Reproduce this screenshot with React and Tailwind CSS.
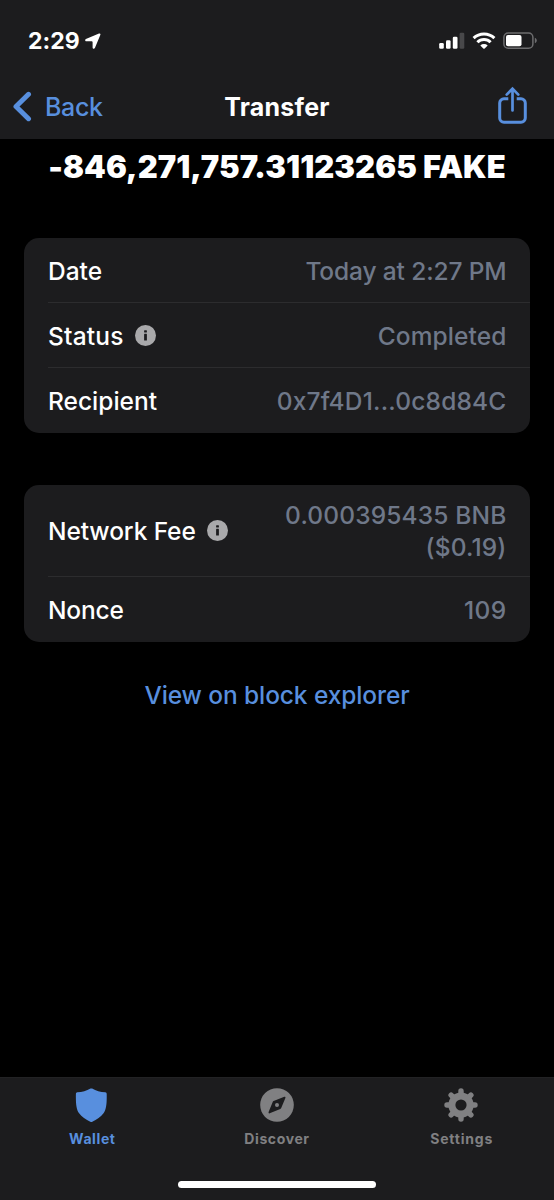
import clsx from 'clsx';

const details = [
  { label: 'Date', value: 'Today at 2:27 PM', labelTracking: 'tracking-[0px]', valueTracking: 'tracking-[-0.13px]' },
  { label: 'Status', value: 'Completed', info: true, labelTracking: 'tracking-[0.2px]', valueTracking: 'tracking-[0.1px]' },
  { label: 'Recipient', value: '0x7f4D1...0c8d84C', labelTracking: 'tracking-[0px]', valueTracking: 'tracking-[0.18px]' },
];

function InfoIcon() {
  return (
    <svg className="ml-[11.5px] h-[21px] w-[21px] shrink-0" viewBox="0 0 21 21">
      <circle cx="10.5" cy="10.5" r="10.5" fill="#a9a9ab" />
      <rect x="9.1" y="5.2" width="2.8" height="2.4" rx="0.5" fill="#1c1c1e" />
      <rect x="9.1" y="8.8" width="2.8" height="6.8" rx="0.4" fill="#1c1c1e" />
    </svg>
  );
}

function Row({ label, value, info, labelTracking, valueTracking, last, tall }) {
  return (
    <div
      className={clsx(
        'ml-6 flex items-center justify-between pr-[23.5px]',
        tall ? 'h-[92px]' : 'h-[65px]',
        !last && 'border-b border-[#2c2c2e]'
      )}
    >
      <div className="flex items-center">
        <span className={clsx('leading-8 whitespace-nowrap text-white', !tall && !last && 'pt-px', labelTracking)}>{label}</span>
        {info && <InfoIcon />}
      </div>
      <span className={clsx('text-right leading-8 whitespace-pre text-[#6f7889]', !tall && !last && 'pt-px', valueTracking)}>
        {value}
      </span>
    </div>
  );
}

function StatusBar() {
  return (
    <div className="flex h-[74px] items-center justify-between pt-[7px] pr-[16px] pl-[28px]">
      <div className="flex items-center">
        <span className="text-[23px] leading-7 font-bold tracking-[0.05px]">2:29</span>
        <svg className="ml-[5px] h-[16px] w-[16px]" viewBox="0 0 16 16" fill="white">
          <path d="M14 .5.9 6C-.2 6.6 0 8.3 1.3 8.3H6.6Q7.6 8.3 7.6 9.3V14.4C7.6 15.9 9.2 16.2 9.9 15L15.3 2C15.8.8 15.1.1 14 .5Z" />
        </svg>
      </div>
      <div className="flex items-center">
        <svg className="h-[17px] w-[26px]" viewBox="0 0 26 17" fill="white">
          <rect x="0.2" y="11" width="4.6" height="5.8" rx="1.3" />
          <rect x="7" y="8.2" width="4.6" height="8.6" rx="1.3" />
          <rect x="13.8" y="4.7" width="4.7" height="12.1" rx="1.3" />
          <rect x="20.6" y="0.8" width="4.7" height="16" rx="1.3" fill="#48484a" />
        </svg>
        <svg className="ml-[7px] h-[17px] w-[24px]" viewBox="0 0 24 17" fill="none" stroke="white" strokeWidth="3">
          <path d="M1.6 6.2a15 15 0 0 1 20.8 0" />
          <path d="M5.4 10.3a9.4 9.4 0 0 1 13.2 0" />
          <path d="M11.3 16.4 8.3 13.5a5.4 5.4 0 0 1 7.4 0L12.7 16.4Q12 17 11.3 16.4Z" fill="white" stroke="none" />
        </svg>
        <svg className="ml-[7px] h-[17px] w-[35px]" viewBox="0 0 35 17">
          <rect x="0.9" y="0.9" width="29" height="15.3" rx="4.3" fill="none" stroke="#6c6c6e" strokeWidth="1.5" />
          <rect x="3" y="3" width="15.5" height="11.2" rx="2" fill="white" />
          <path d="M31.8 5.8c2.7 1 2.7 4.4 0 5.4Z" fill="#6c6c6e" />
        </svg>
      </div>
    </div>
  );
}

function NavBar() {
  return (
    <div className="grid h-[65px] grid-cols-3 items-center">
      <button className="flex items-center pl-[13px] text-[#588fde]">
        <svg className="h-[31px] w-[19px]" viewBox="0 0 19 31" fill="none" stroke="currentColor" strokeWidth="5" strokeLinecap="round" strokeLinejoin="round">
          <path d="M15.5 3.3 3 15.5l12.5 12.2" />
        </svg>
        <span className="ml-[13px] pt-[2px] text-[25px] font-[450] tracking-[-0.35px]">Back</span>
      </button>
      <h1 className="pt-[2px] text-center text-[25px] font-bold tracking-[0.2px]">Transfer</h1>
      <button className="flex justify-end pr-[26px] pb-[3px] text-[#588fde]">
        <svg className="h-[38px] w-[31px]" viewBox="0 0 31 38" fill="none" stroke="currentColor" strokeWidth="3">
          <path d="M11.3 12.7H7A4.3 4.3 0 0 0 2.7 17v15A4.3 4.3 0 0 0 7 36.3h17a4.3 4.3 0 0 0 4.3-4.3V17a4.3 4.3 0 0 0-4.3-4.3h-4.3" />
          <path d="M15.5 24.5V3M9.7 8.6l5.8-6 5.8 6" strokeWidth="2.7" strokeLinecap="round" />
        </svg>
      </button>
    </div>
  );
}

function TabBar() {
  return (
    <nav className="h-[123px] bg-[#1c1c1e] text-[14px] leading-5 font-bold text-[#808082]">
      <div className="grid h-[104px] grid-cols-3 border-t border-[#222224] pt-[10px]">
        <div className="flex flex-col items-center text-[#588fde]">
          <svg className="mr-[2px] h-[34px] w-[34px]" viewBox="0 0 34 34" fill="currentColor">
            <path d="M16.5.6Q17.3 .2 18.1.6C22.1 3 26.3 4.1 31.3 4.3Q32.7 4.5 32.7 5.8C32.9 15.8 32.3 21.5 29.5 25.3 27.1 28.9 22.6 31.4 18.3 33.8Q17.3 34.3 16.3 33.8C12 31.4 7.5 28.9 5.1 25.3 2.3 21.5 1.7 15.8 1.9 5.8Q1.9 4.5 3.3 4.3C8.3 4.1 12.5 3 16.5.6Z" />
          </svg>
          <span className="mt-[7px] tracking-[0.6px]">Wallet</span>
        </div>
        <div className="flex flex-col items-center">
          <svg className="h-[34px] w-[34px]" viewBox="0 0 34 34">
            <circle cx="17" cy="17" r="16.8" fill="currentColor" />
            <path d="M24.3 8.8 13.6 13.1Q13 13.3 12.7 14L8.6 24.1Q8.2 25.7 9.7 25.3L20.3 20.9Q20.9 20.7 21.2 20L25.4 10Q25.8 8.4 24.3 8.8Z" fill="#1c1c1e" />
            <circle cx="17" cy="17" r="2" fill="currentColor" />
          </svg>
          <span className="mt-[7px] tracking-[0.6px]">Discover</span>
        </div>
        <div className="flex flex-col items-center">
          <svg className="mr-[1px] h-[34px] w-[34px]" viewBox="0 0 34 34">
            <circle cx="17" cy="17" r="12.6" fill="currentColor" />
            <path d="M17 3v28M3 17h28M7.1 7.1l19.8 19.8M7.1 26.9 26.9 7.1" stroke="currentColor" strokeWidth="5.4" strokeLinecap="round" />
            <circle cx="17" cy="17" r="5.6" fill="#1c1c1e" />
          </svg>
          <span className="mt-[7px] tracking-[0.8px]">Settings</span>
        </div>
      </div>
      <div className="mx-auto h-[7px] w-[198px] rounded-full bg-white" />
    </nav>
  );
}

export default function App() {
  return (
    <div className="flex h-[1200px] w-[554px] flex-col overflow-hidden bg-black font-['Inter',sans-serif] text-white">
      <header className="bg-[#1c1c1e]">
        <StatusBar />
        <NavBar />
      </header>

      <main className="flex-1 px-6 text-[24.5px] font-medium">
        <h2 className="flex h-[99px] justify-center pt-[8px] text-[31px] leading-10 font-black tracking-[0.05px] whitespace-nowrap">
          -846,271,757.31123265 FAKE
        </h2>

        <section className="w-[506px] rounded-[15px] bg-[#1c1c1e]">
          {details.map((item, i) => (
            <Row key={item.label} {...item} last={i === details.length - 1} />
          ))}
        </section>

        <section className="mt-[52px] w-[506px] rounded-[15px] bg-[#1c1c1e]">
          <Row label="Network Fee" value={'0.000395435 BNB\n($0.19)'} info tall labelTracking="tracking-[-0.1px]" valueTracking="tracking-[0.15px]" />
          <Row label="Nonce" value="109" last labelTracking="tracking-[-0.2px]" valueTracking="tracking-[0.4px]" />
        </section>

        <button className="mx-auto mt-[37px] block leading-8 tracking-[-0.1px] text-[#588fde]">View on block explorer</button>
      </main>

      <TabBar />
    </div>
  );
}
